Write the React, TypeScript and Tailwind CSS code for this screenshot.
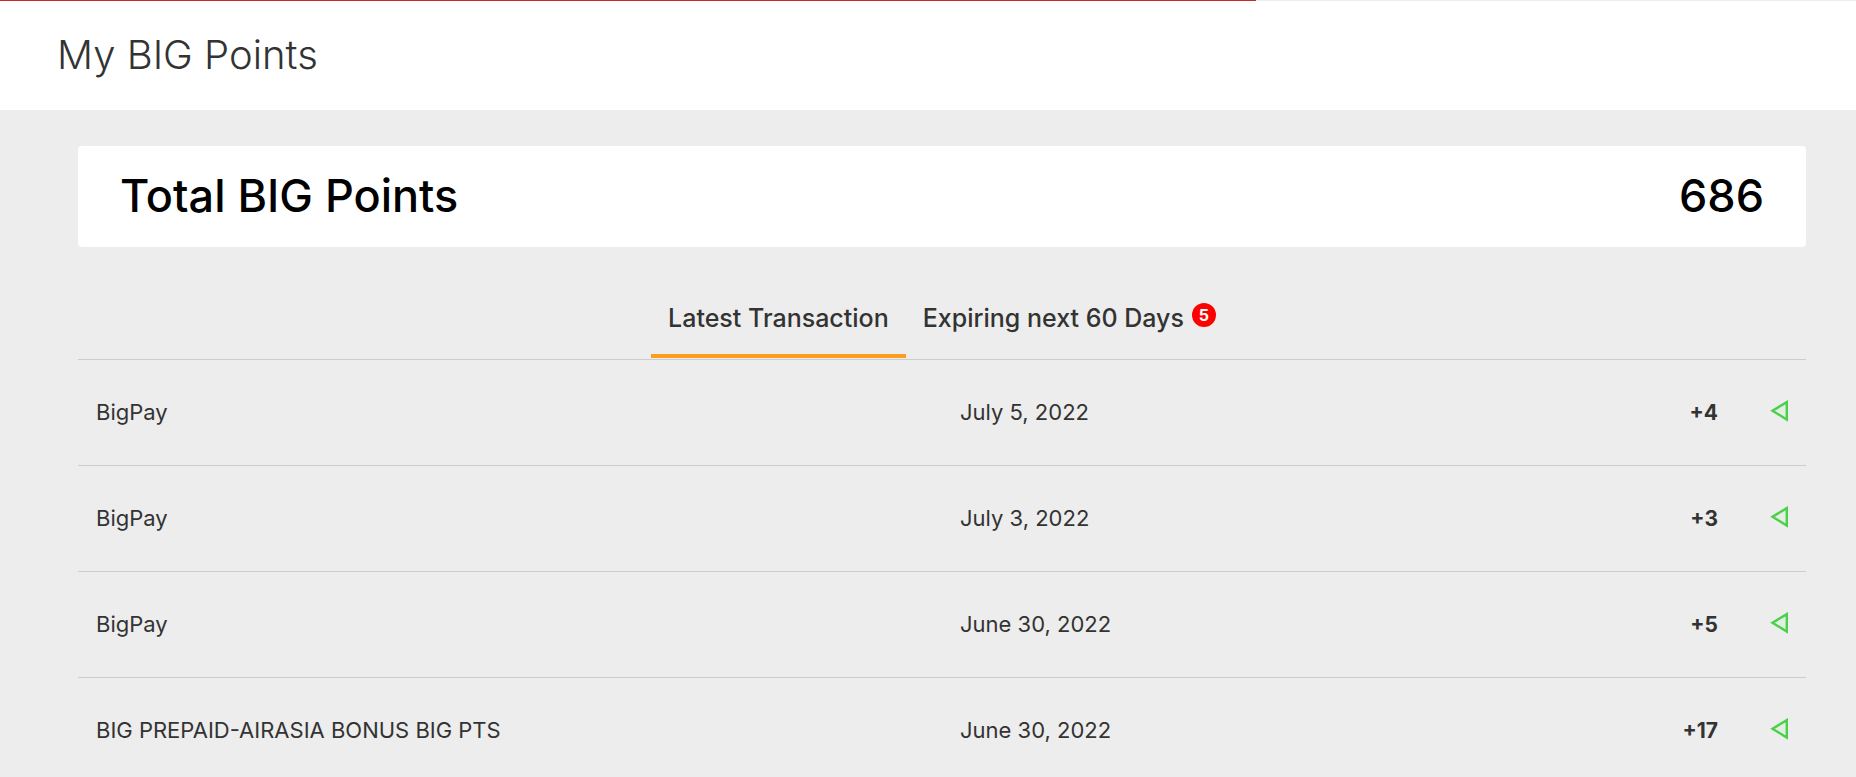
import { useState } from "react";

const transactions = [
  { id: 1, name: "BigPay", date: "July 5, 2022", points: 4 },
  { id: 2, name: "BigPay", date: "July 3, 2022", points: 3 },
  { id: 3, name: "BigPay", date: "June 30, 2022", points: 5 },
  {
    id: 4,
    name: "BIG PREPAID-AIRASIA BONUS BIG PTS",
    date: "June 30, 2022",
    points: 17,
  },
];

function EarnedIcon() {
  return (
    <svg
      width="18"
      height="22"
      viewBox="0 0 18 22"
      className="ml-auto"
      aria-hidden="true"
    >
      <path
        d="M16.8 2.1V19.5L2.5 10.8Z"
        fill="#e2efe2"
        stroke="#4bd04b"
        strokeWidth="2.4"
      />
    </svg>
  );
}

export default function App() {
  const [tab, setTab] = useState("latest");

  const tabClass =
    "flex items-start px-[17px] pb-[21px] border-b-4 text-[25px] leading-[30px] font-medium";

  return (
    <div className="min-h-screen bg-[#ededed] text-[#333333] font-['Inter',sans-serif]">

      <div className="h-px bg-[#ededed]">
        <div className="h-px w-[1256px] max-w-full bg-[#c42b2b]" />
      </div>

      <header className="bg-white px-[57px] pt-[30px] pb-[31px]">
        <h1 className="text-[40px] leading-[48px] font-light">My BIG Points</h1>
      </header>

      <main className="pl-[78px] pr-[50px] pt-9">

        <section className="flex items-center justify-between rounded bg-white px-[42px] pt-6 pb-[25px] text-[45px] leading-[52px] font-medium text-black">
          <h2>Total BIG Points</h2>
          <span>686</span>
        </section>

        <div className="flex justify-center border-b border-[#cccccc] pt-14 pb-px">

          <button
            onClick={() => setTab("latest")}
            className={`${tabClass} ${
              tab === "latest" ? "border-[#fa9e1b]" : "border-transparent"
            }`}
          >
            Latest Transaction
          </button>

          <button
            onClick={() => setTab("expiring")}
            className={`${tabClass} ${
              tab === "expiring" ? "border-[#fa9e1b]" : "border-transparent"
            }`}
          >
            Expiring next 60 Days
            <span className="ml-2 flex h-6 w-6 items-center justify-center rounded-full bg-[red] text-base font-bold text-white">
              5
            </span>
          </button>

        </div>

        <table className="w-full table-fixed text-[22px] leading-[25px]">
          <tbody>
            {transactions.map((item) => (
              <tr key={item.id} className="border-b border-[#cccccc] align-top">
                <td className="w-1/2 px-[18px] py-10">{item.name}</td>
                <td className="w-1/4 px-[18px] py-10">{item.date}</td>
                <td className="px-[18px] py-10 text-right text-[21px] font-bold">
                  +{item.points}
                </td>
                <td className="w-[70px] px-[18px] py-10">
                  <EarnedIcon />
                </td>
              </tr>
            ))}
          </tbody>
        </table>

      </main>

    </div>
  );
}
